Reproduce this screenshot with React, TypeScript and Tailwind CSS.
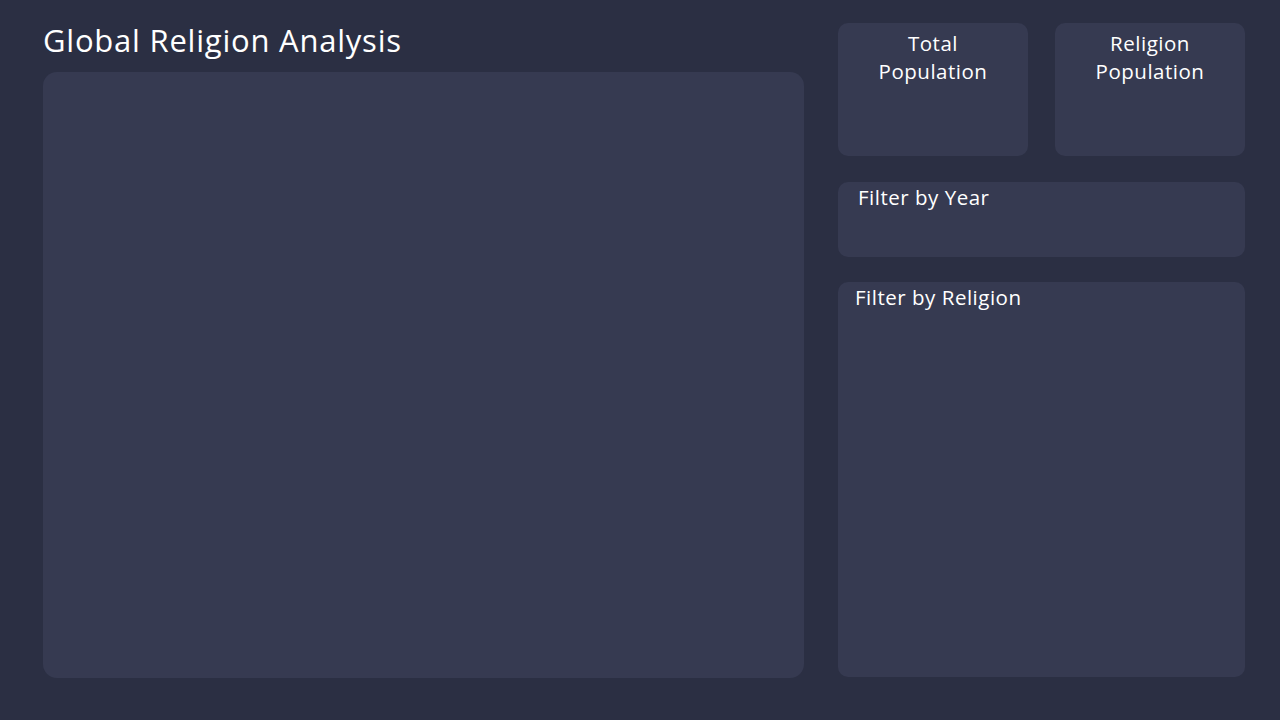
export default function App() {
  return (
    <div
      className="flex h-[720px] w-[1280px] gap-[34px] bg-[#2b2f43] pl-[43px] pr-[35px] pt-[23px] text-white"
      style={{ fontFamily: '"Open Sans", "Liberation Sans", sans-serif' }}
    >
      <div className="flex w-[761px] flex-col">
        <h1 className="-mt-[2px] mb-[13px] h-[38px] text-[31px] leading-[38px] font-medium tracking-[0.025em]">
          Global Religion Analysis
        </h1>
        <div className="h-[606px] rounded-[14px] bg-[#363a51]"></div>
      </div>

      <div className="flex w-[407px] flex-col">
        <div className="flex gap-[27px]">
          <div className="h-[133px] w-[190px] rounded-[10px] bg-[#363a51] pt-[6px] text-center text-[20.5px] leading-[28px] font-medium tracking-[0.025em]">
            Total
            <br />
            Population
          </div>
          <div className="h-[133px] w-[190px] rounded-[10px] bg-[#363a51] pt-[6px] text-center text-[20.5px] leading-[28px] font-medium tracking-[0.025em]">
            Religion
            <br />
            Population
          </div>
        </div>

        <div className="mt-[26px] h-[75px] rounded-[10px] bg-[#363a51] pl-[20px] pt-[1px] text-[20.5px] leading-[28px] font-medium tracking-[0.025em]">
          Filter by Year
        </div>

        <div className="mt-[25px] h-[395px] rounded-[10px] bg-[#363a51] pl-[17px] pt-[1px] text-[20.5px] leading-[28px] font-medium tracking-[0.025em]">
          Filter by Religion
        </div>
      </div>
    </div>
  );
}
